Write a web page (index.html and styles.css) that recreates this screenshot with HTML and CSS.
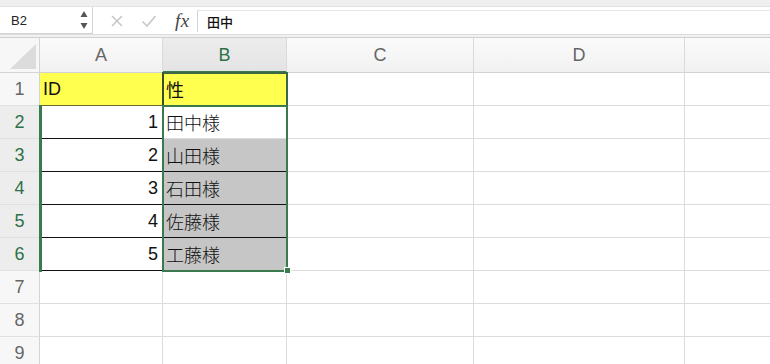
FILE: index.html
```html
<!DOCTYPE html>
<html lang="ja">
<head>
<meta charset="utf-8">
<link rel="stylesheet" href="styles.css">
</head>
<body>
<div class="app">
  <div class="strip"></div>
  <div class="fbar">
    <div class="namebox">
      <span class="nb-text">B2</span>
      <svg class="spin" width="8" height="22" viewBox="0 0 8 22"><path d="M4 2 L7.5 8 L0.5 8 Z" fill="#555"/><path d="M4 20 L7.5 14 L0.5 14 Z" fill="#555"/></svg>
    </div>
    <div class="ficons">
      <svg width="14" height="14" viewBox="0 0 14 14"><path d="M2 2 L12 12 M12 2 L2 12" stroke="#c8c8c8" stroke-width="1.6"/></svg>
      <svg width="16" height="14" viewBox="0 0 16 14"><path d="M1.5 7.5 L6 12 L14.5 2" stroke="#c8c8c8" stroke-width="1.6" fill="none"/></svg>
      <span class="fx">fx</span>
    </div>
    <div class="finput">田中</div>
  </div>
  <div class="sep"></div>
  <div class="sheet">
    <div class="grid">
      <div class="corner"><svg width="40" height="35" viewBox="0 0 40 35"><path d="M36 6 L36 31 L10 31 Z" fill="#dcdcdc"/></svg></div>
      <div class="ch">A</div>
      <div class="ch sel">B</div>
      <div class="ch">C</div>
      <div class="ch">D</div>
      <div class="ch last"></div>

      <div class="rh">1</div>
      <div class="c yel">ID</div>
      <div class="c yel">性</div>
      <div class="c"></div><div class="c"></div><div class="c last"></div>

      <div class="rh sel">2</div>
      <div class="c num bl">1</div>
      <div class="c jp">田中様</div>
      <div class="c"></div><div class="c"></div><div class="c last"></div>

      <div class="rh sel">3</div>
      <div class="c num bl">2</div>
      <div class="c jp gry">山田様</div>
      <div class="c"></div><div class="c"></div><div class="c last"></div>

      <div class="rh sel">4</div>
      <div class="c num bl">3</div>
      <div class="c jp gry">石田様</div>
      <div class="c"></div><div class="c"></div><div class="c last"></div>

      <div class="rh sel">5</div>
      <div class="c num bl">4</div>
      <div class="c jp gry">佐藤様</div>
      <div class="c"></div><div class="c"></div><div class="c last"></div>

      <div class="rh sel">6</div>
      <div class="c num bl">5</div>
      <div class="c jp gry">工藤様</div>
      <div class="c"></div><div class="c"></div><div class="c last"></div>

      <div class="rh">7</div>
      <div class="c"></div><div class="c"></div><div class="c"></div><div class="c"></div><div class="c last"></div>
      <div class="rh">8</div>
      <div class="c"></div><div class="c"></div><div class="c"></div><div class="c"></div><div class="c last"></div>
      <div class="rh">9</div>
      <div class="c"></div><div class="c"></div><div class="c"></div><div class="c"></div><div class="c last"></div>
    </div>
    <div class="selA"></div>
    <div class="selB1"></div>
    <div class="selB"></div>
    <div class="handle"></div>
  </div>
</div>
</body>
</html>
```
FILE: styles.css
```css
* { box-sizing: border-box; }
html, body { margin: 0; padding: 0; }
body {
  width: 770px; height: 364px; overflow: hidden; background: #fff;
  font-family: "Liberation Sans", "Noto Sans CJK JP", sans-serif;
}
.app { display: flex; flex-direction: column; width: 770px; }
.strip { height: 7px; background: #efefef; border-bottom: 1px solid #e2e2e2; }
.fbar { height: 27px; display: flex; align-items: stretch; background: #fff; }
.namebox {
  width: 93px; border-right: 1px solid #d4d4d4; border-bottom: 1px solid #d4d4d4;
  display: flex; align-items: center; justify-content: space-between; padding: 0 4px 0 11px;
}
.nb-text { font-size: 13px; color: #222; }
.ficons { display: flex; align-items: center; gap: 17px; padding-left: 17px; width: 104px; }
.fx { font-family: "Liberation Serif", serif; font-style: italic; font-size: 19px; color: #444; margin-left: 1px; letter-spacing: 0.5px; }
.finput {
  flex: 1; border-left: 1px solid #d4d4d4; margin: 3px 0 2px 0; padding-left: 9px;
  font-family: "Noto Sans CJK JP", sans-serif; font-size: 13px; font-weight: 500; color: #111;
  display: flex; align-items: center; border-top: 1px solid #e6e6e6;
}
.sep { height: 4px; background: #f1f1f1; border-top: 1px solid #dcdcdc; border-bottom: 1px solid #cfcfcf; }
.sheet { position: relative; }
.grid {
  display: grid;
  grid-template-columns: 40px 123px 124px 187px 211px 85px;
  grid-template-rows: 35px repeat(9, 33px);
}
.corner { background: #f7f7f7; border-right: 1px solid #d4d4d4; border-bottom: 1px solid #d4d4d4; }
.corner svg { display: block; }
.ch {
  background: linear-gradient(#fbfbfb, #f1f1f1);
  border-right: 1px solid #dadada; border-bottom: 1px solid #d2d2d2;
  display: flex; align-items: center; justify-content: center;
  font-size: 18px; color: #666; padding-top: 1px;
}
.ch.sel { background: linear-gradient(#ececec, #e4e4e4); color: #2f7048; border-bottom: 2px solid #3a7a4f; }
.ch.last { border-right: none; }
.rh {
  background: #f7f7f7; border-right: 1px solid #d4d4d4; border-bottom: 1px solid #e0e0e0;
  display: flex; align-items: center; justify-content: center;
  font-size: 18px; color: #666;
}
.rh.sel { color: #2f7048; background: #ededed; }
.c {
  border-right: 1px solid #dcdcdc; border-bottom: 1px solid #dcdcdc;
  display: flex; align-items: center; font-size: 18px; color: #111; padding: 0 3px;
}
.c.last { border-right: none; }
.yel { background: #ffff4f; border-bottom: 1px solid #6b6b2e; }
.num { justify-content: flex-end; padding-right: 4px; }
.bl { border-bottom: 1px solid #111; }
.jp { font-family: "Noto Sans CJK JP", sans-serif; font-size: 18px; font-weight: 300; }
.gry { background: #c6c6c6; border-bottom: 1px solid #111; }
.selA {
  position: absolute; left: 39px; top: 67px; width: 3px; height: 167px;
  background: #3a7a4f;
}
.selB1 {
  position: absolute; left: 162px; top: 34px; width: 126px; height: 35px;
  border: 2px solid #3a6a45; border-left-color: #3b4a30;
}
.selB {
  position: absolute; left: 162px; top: 67px; width: 126px; height: 167px;
  border: 2px solid #3a7a4f;
}
.handle {
  position: absolute; left: 284px; top: 229px; width: 7px; height: 7px;
  background: #3a7a4f; border: 1px solid #fff;
}
```
